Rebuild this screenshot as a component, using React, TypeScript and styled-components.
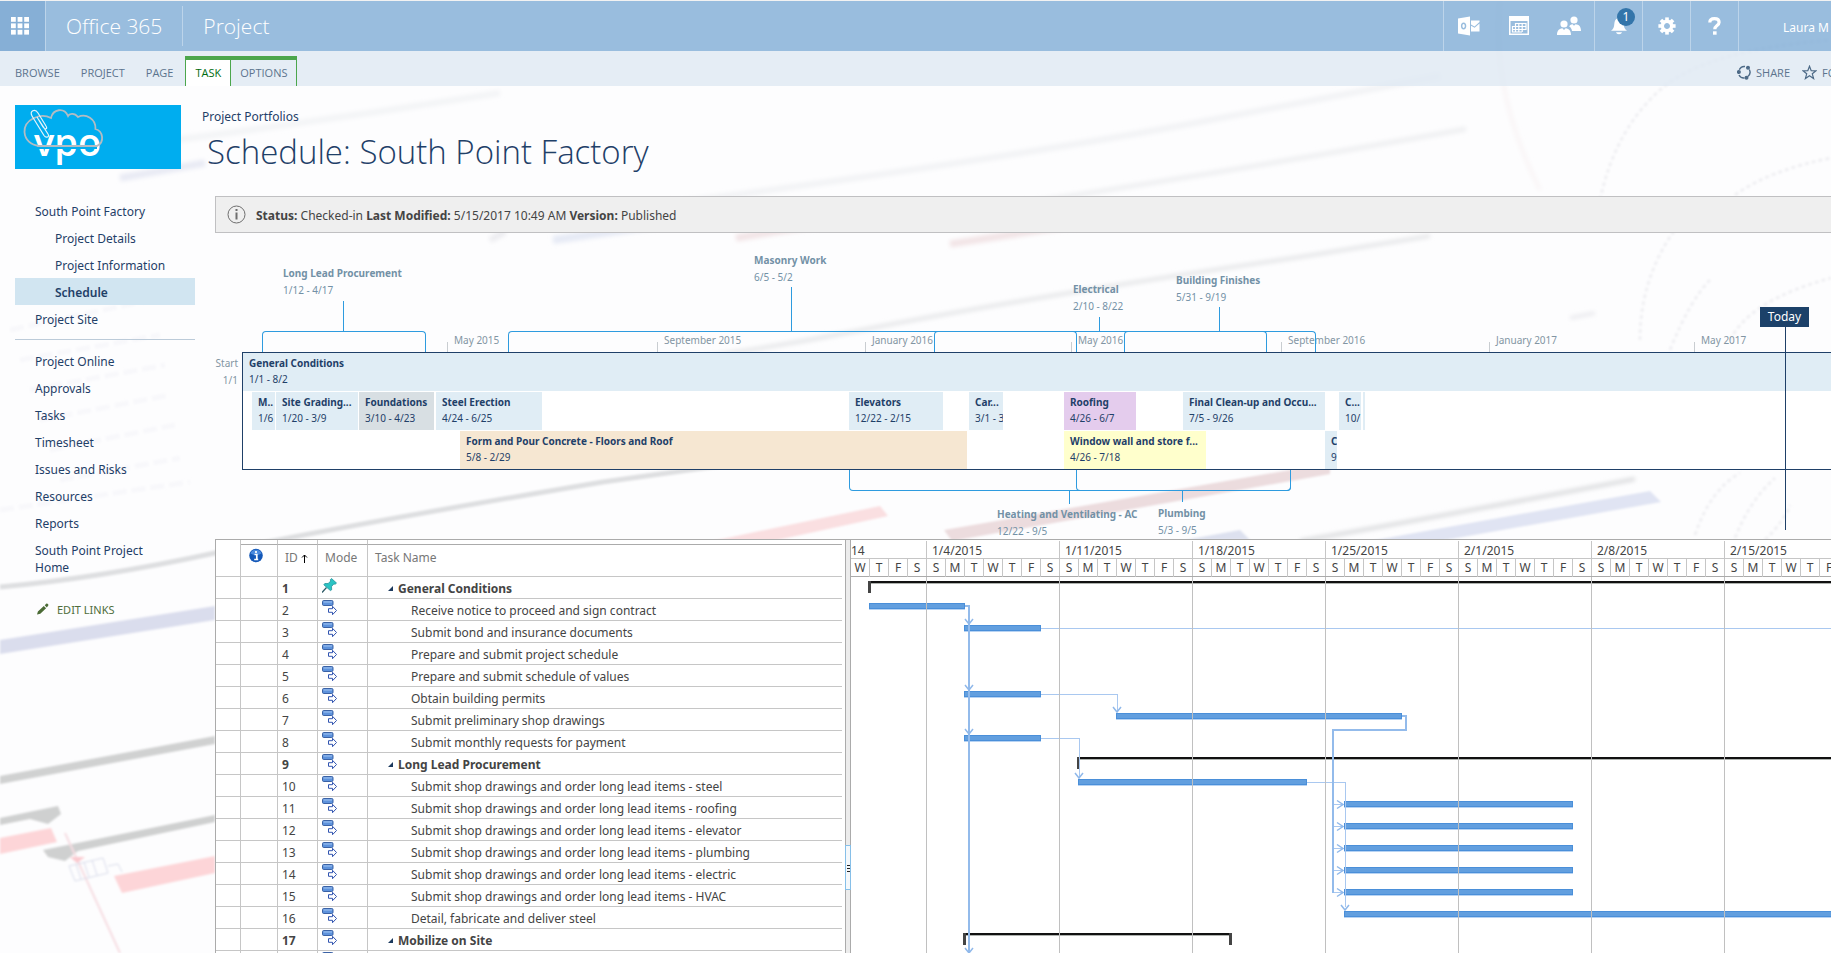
import React from "react";
import styled, { createGlobalStyle } from "styled-components";

const navy = "#1f4068";
const line = "#c6c6c6";

const GlobalStyle = createGlobalStyle`
  * { box-sizing: border-box; }
  html, body { margin: 0; height: 100%; }
  #root { height: 100vh; }
  body {
    font-family: "Noto Sans", "Open Sans", sans-serif;
    font-size: 12px;
    line-height: 17px;
    color: #444;
    background: #fdfdfe;
  }
  button { font: inherit; border: 0; padding: 0; background: none; cursor: pointer; }
  a { color: inherit; text-decoration: none; }
`;

const Page = styled.div`
  position: relative;
  z-index: 0;
  display: flex;
  flex-direction: column;
  height: 100%;
  overflow: hidden;
`;

const Backdrop = styled.svg`
  position: absolute;
  inset: 0;
  z-index: -1;
  width: 100%;
  height: 100%;
`;

/* ---------- suite bar ---------- */

const SuiteBar = styled.header`
  display: flex;
  flex: none;
  height: 51px;
  border-top: 1px solid #f2f2f2;
  background: rgba(128, 172, 214, 0.8);
  color: #fff;
`;

const Launcher = styled.button`
  display: grid;
  place-items: center;
  width: 46px;
  padding-right: 5px;
  background: rgba(104, 156, 202, 0.4);
  border-right: 1px solid #bcd4ea;
`;

const Brand = styled.a`
  display: flex;
  align-items: center;
  padding: 0 20px;
  font-family: "Open Sans", sans-serif;
  font-size: 21px;
  font-weight: 300;
`;

const BrandRule = styled.span`
  width: 1px;
  margin: 5px 0;
  background: #bcd4ea;
`;

const SuiteTools = styled.nav`
  display: flex;
  margin-left: auto;
`;

const ToolGroup = styled.div`
  display: flex;
  border-left: 1px solid #bcd4ea;
`;

const ToolButton = styled.button<{ $w: number }>`
  position: relative;
  display: grid;
  place-items: center;
  width: ${(p) => p.$w}px;
  padding-bottom: 1px;
  color: #fff;
`;

const Badge = styled.span`
  position: absolute;
  top: 7px;
  right: 7px;
  width: 18px;
  height: 18px;
  border-radius: 50%;
  background: #3375aa;
  line-height: 18px;
  text-align: center;
`;

const UserName = styled.button`
  width: 93px;
  padding: 2px 0 0 44px;
  color: #fff;
  text-align: left;
  white-space: nowrap;
  overflow: hidden;
  border-left: 1px solid #bcd4ea;
`;

/* ---------- ribbon ---------- */

const Ribbon = styled.div`
  display: flex;
  flex: none;
  align-items: flex-end;
  height: 35px;
  padding-left: 6px;
  background: rgba(222, 232, 243, 0.8);
  color: #5c748e;
  font-family: "Open Sans", sans-serif;
  font-size: 11px;
`;

const Tab = styled.button`
  height: 30px;
  margin-right: 3px;
  padding: 3px 9px 0;
  color: #5c748e;
`;

const TabGroup = styled.div`
  display: flex;
  border: 1px solid #4ca64c;
  border-width: 4px 1px 0;
`;

const GroupTab = styled.button<{ $active?: boolean }>`
  height: 26px;
  padding: 0 9px 1px;
  color: ${(p) => (p.$active ? "#006b10" : "#5c748e")};
  background: ${(p) => (p.$active ? "#fff" : "transparent")};
  border-right: ${(p) => (p.$active ? "1px solid #4ca64c" : "0")};
`;

const PageActions = styled.div`
  display: flex;
  gap: 12px;
  width: 94px;
  margin-left: auto;
  overflow: hidden;
`;

const PageAction = styled.button`
  display: flex;
  flex: none;
  align-items: center;
  gap: 5px;
  height: 28px;
  color: #5c748e;
`;

/* ---------- left column ---------- */

const Body = styled.div`
  display: flex;
  flex: 1;
  min-height: 0;
`;

const Side = styled.aside`
  flex: none;
  width: 195px;
  padding: 19px 0 0 15px;
  color: ${navy};
`;

const Logo = styled.a`
  display: block;
  width: 166px;
  height: 64px;
  margin-bottom: 28px;
  background: #00adef;
`;

const NavList = styled.ul`
  margin: 0;
  padding: 0;
  list-style: none;

  & + & {
    margin-top: 7px;
    padding-top: 7px;
    border-top: 1px solid #bccbd9;
  }
`;

const NavLink = styled.a<{ $sub?: boolean; $current?: boolean }>`
  display: block;
  padding: 6px 20px 4px ${(p) => (p.$sub ? 40 : 20)}px;
  background: ${(p) => (p.$current ? "#d1e5f1" : "transparent")};
  font-weight: ${(p) => (p.$current ? 600 : 400)};
`;

const EditLinks = styled.button`
  display: flex;
  align-items: center;
  gap: 8px;
  margin: 16px 0 0 22px;
  height: 26px;
  color: #4f6d3c;
  font-size: 11px;
`;

/* ---------- main column ---------- */

const Main = styled.main`
  display: flex;
  flex: 1;
  flex-direction: column;
  min-width: 0;
`;

const Heading = styled.div`
  padding: 22px 0 21px 7px;
  color: ${navy};

  h1 {
    margin: 4px 0 0 5px;
    font-family: "Open Sans", sans-serif;
    font-size: 33px;
    line-height: 46px;
    font-weight: 300;
  }
`;

const Content = styled.div`
  display: flex;
  flex: 1;
  flex-direction: column;
  min-height: 0;
  margin-left: 20px;
`;

const StatusBar = styled.div`
  display: flex;
  flex: none;
  align-items: center;
  gap: 10px;
  height: 37px;
  padding-left: 11px;
  border: 1px solid #c0c0c2;
  border-right: 0;
  background: #efefef;

  p { margin: 0; padding-top: 1px; }
  b { font-weight: 700; }
`;

/* ---------- timeline ---------- */

const Timeline = styled.section`
  position: relative;
  flex: none;
  height: 306px;
  overflow: hidden;
  font-size: 10px;
  color: #8295a3;
`;

const Track = styled.div`
  position: absolute;
  left: 27px;
  right: 0;
  top: 119px;
  height: 118px;
  background: #fff;
  border: 1px solid ${navy};
  border-right: 0;
`;

const TrackEdge = styled.div`
  position: absolute;
  top: 122px;
  left: 0;
  width: 23px;
  text-align: right;
  white-space: nowrap;
`;

const TimelineTask = styled.div<{ $x: number; $w?: number; $row: number; $fill: string }>`
  position: absolute;
  left: ${(p) => p.$x}px;
  ${(p) => (p.$w ? `width: ${p.$w}px;` : "right: 0;")}
  top: ${(p) => p.$row * 39}px;
  height: 38px;
  padding: 2px 0 0 ${(p) => (p.$w && p.$w < 6 ? 0 : 6)}px;
  overflow: hidden;
  background: ${(p) => p.$fill};
  color: ${navy};
  line-height: 16px;
  white-space: nowrap;

  b { display: block; font-weight: 700; }
`;

const Callout = styled.div<{ $x: number; $y: number }>`
  position: absolute;
  left: ${(p) => p.$x}px;
  top: ${(p) => p.$y}px;
  color: #7391a6;
  white-space: nowrap;

  b { display: block; font-weight: 700; }
`;

const Bracket = styled.div<{ $x: number; $w: number; $below?: boolean }>`
  position: absolute;
  left: ${(p) => p.$x}px;
  width: ${(p) => p.$w}px;
  top: ${(p) => (p.$below ? 237 : 98)}px;
  height: 21px;
  border: 1px solid #2e9bdf;
  ${(p) => (p.$below ? "border-top: 0; border-radius: 0 0 4px 4px;" : "border-bottom: 0; border-radius: 4px 4px 0 0;")}
`;

const Stem = styled.div<{ $x: number; $y: number; $h: number }>`
  position: absolute;
  left: ${(p) => p.$x}px;
  top: ${(p) => p.$y}px;
  width: 1px;
  height: ${(p) => p.$h}px;
  background: #2e9bdf;
`;

const Tick = styled.div<{ $x: number }>`
  position: absolute;
  left: ${(p) => p.$x}px;
  top: 99px;
  height: 20px;
  padding-left: 7px;
  white-space: nowrap;

  &::before {
    content: "";
    position: absolute;
    left: 0;
    bottom: 0;
    height: 10px;
    border-left: 1px solid #c9cdd1;
  }
`;

const Today = styled.div`
  position: absolute;
  left: 1545px;
  top: 74px;
  width: 49px;
  height: 20px;
  background: #1c4169;
  color: #fff;
  font-size: 12px;
  line-height: 19px;
  text-align: center;

  &::after {
    content: "";
    position: absolute;
    left: 25px;
    top: 20px;
    width: 1px;
    height: 203px;
    background: ${navy};
  }
`;

/* ---------- task grid ---------- */

const GridPanel = styled.section`
  display: flex;
  flex: 1;
  min-height: 0;
  overflow: hidden;
  background: #fff;
  border: 1px solid #ababab;
  border-width: 1px 0 0 1px;
`;

const TaskPane = styled.div`
  flex: none;
  width: 629px;
  padding-right: 3px;
  overflow: hidden;
`;

const TaskTable = styled.table`
  width: 100%;
  table-layout: fixed;
  border-collapse: separate;
  border-spacing: 0;

  th, td {
    padding: 0 4px;
    border: 0 solid ${line};
    border-width: 0 1px 1px 0;
    text-align: left;
    white-space: nowrap;
    overflow: hidden;
  }
  th:last-child, td:last-child { border-right: 0; }
`;

const CapRow = styled.tr`
  th { height: 5px; line-height: 4px; border-bottom-color: #ababab; }
  th:first-child { border-bottom: 0; }
`;

const HeadRow = styled.tr`
  th { height: 32px; padding: 3px 7px 9px; line-height: 18px; color: #777; font-weight: 400; }
  th:nth-child(2) { padding: 0 8px 11px; }
  svg { vertical-align: middle; }
`;

const TaskRow = styled.tr<{ $summary?: boolean }>`
  td { height: 22px; padding-top: 2px; font-weight: ${(p) => (p.$summary ? 700 : 400)}; }
  td:nth-child(4) { vertical-align: top; padding-top: 1px; }
  svg { display: block; }
`;

const TaskName = styled.span<{ $summary?: boolean }>`
  display: flex;
  align-items: center;
  gap: 5px;
  padding-left: ${(p) => (p.$summary ? 16 : 39)}px;
`;

const Splitter = styled.div`
  position: relative;
  flex: none;
  width: 6px;
  background: #ececec;
  border: 1px solid #ababab;
  border-width: 0 1px;
`;

const SplitterGrip = styled.button`
  position: absolute;
  top: 305px;
  left: -1px;
  display: grid;
  place-items: center;
  width: 6px;
  height: 45px;
  border: 1px solid #86bfe8;
  background: #f4f8fb;
`;

const GanttPane = styled.div`
  flex: 1;
  min-width: 0;
  overflow: hidden;
`;

const Scale = styled.div`
  display: flex;
  height: 37px;
  border-bottom: 1px solid #ababab;
`;

const Week = styled.div<{ $w: number; $first?: boolean }>`
  flex: none;
  width: ${(p) => p.$w}px;
  margin-top: 1px;
  border-right: 1px solid ${line};

  > div:first-child {
    height: 18px;
    padding-left: ${(p) => (p.$first ? 0 : 5)}px;
    line-height: 20px;
    border-bottom: 1px solid ${line};
    white-space: nowrap;
  }
`;

const Days = styled.div`
  display: flex;
  justify-content: flex-end;
  line-height: 18px;
  text-align: center;

  span { flex: none; width: 19px; border-right: 1px solid ${line}; }
  span:last-child { width: 18px; border-right: 0; }
`;

const Chart = styled.svg`
  display: block;
  width: 100%;
  height: 380px;
  overflow: hidden;
`;

/* ---------- data ---------- */

const siteLinks = [
  { text: "South Point Factory" },
  { text: "Project Details", sub: true },
  { text: "Project Information", sub: true },
  { text: "Schedule", sub: true, current: true },
  { text: "Project Site" },
];

const onlineLinks = [
  "Project Online", "Approvals", "Tasks", "Timesheet", "Issues and Risks",
  "Resources", "Reports", "South Point Project Home",
];

const blue = "#e0edf5";

const timelineTasks = [
  { name: "General Conditions", dates: "1/1 - 8/2", x: 0, row: 0, fill: blue },
  { name: "M..", dates: "1/6", x: 9, w: 23, row: 1, fill: blue },
  { name: "Site Grading...", dates: "1/20 - 3/9", x: 33, w: 82, row: 1, fill: blue },
  { name: "Foundations", dates: "3/10 - 4/23", x: 116, w: 75, row: 1, fill: "#d8dfe3" },
  { name: "Steel Erection", dates: "4/24 - 6/25", x: 193, w: 106, row: 1, fill: blue },
  { name: "Elevators", dates: "12/22 - 2/15", x: 606, w: 94, row: 1, fill: blue },
  { name: "Car...", dates: "3/1 - 3", x: 726, w: 34, row: 1, fill: blue },
  { name: "Roofing", dates: "4/26 - 6/7", x: 821, w: 72, row: 1, fill: "#e4cced" },
  { name: "Final Clean-up and Occu...", dates: "7/5 - 9/26", x: 940, w: 142, row: 1, fill: blue },
  { name: "C...", dates: "10/", x: 1096, w: 22, row: 1, fill: blue },
  { name: "", dates: "", x: 1120, w: 2, row: 1, fill: blue },
  { name: "Form and Pour Concrete - Floors and Roof", dates: "5/8 - 2/29", x: 217, w: 507, row: 2, fill: "#f6e7d2" },
  { name: "Window wall and store f...", dates: "4/26 - 7/18", x: 821, w: 142, row: 2, fill: "#ffffcc" },
  { name: "C", dates: "9", x: 1082, w: 12, row: 2, fill: blue },
];

const callouts = [
  { name: "Long Lead Procurement", dates: "1/12 - 4/17", x: 68, y: 32, bx: 47, bw: 164, stem: 128, sy: 68, sh: 30 },
  { name: "Masonry Work", dates: "6/5 - 5/2", x: 539, y: 19, bx: 293, bw: 569, stem: 576, sy: 54, sh: 44 },
  { name: "Electrical", dates: "2/10 - 8/22", x: 858, y: 48, bx: 719, bw: 333, stem: 884, sy: 84, sh: 14 },
  { name: "Building Finishes", dates: "5/31 - 9/19", x: 961, y: 39, bx: 909, bw: 192, stem: 1004, sy: 74, sh: 24 },
  { name: "Heating and Ventilating - AC", dates: "12/22 - 9/5", x: 782, y: 273, bx: 634, bw: 442, stem: 854, sy: 258, sh: 13, below: true },
  { name: "Plumbing", dates: "5/3 - 9/5", x: 943, y: 272, bx: 861, bw: 215, stem: 967, sy: 258, sh: 11, below: true },
];

const ticks = [
  { label: "May 2015", x: 232 },
  { label: "September 2015", x: 442 },
  { label: "January 2016", x: 650 },
  { label: "May 2016", x: 856 },
  { label: "September 2016", x: 1066 },
  { label: "January 2017", x: 1274 },
  { label: "May 2017", x: 1479 },
];

/* start and end are days counted from 1/1/2015; tasks without them have no bar */
type Task = { name: string; summary?: boolean; start?: number; end?: number };

const tasks: Task[] = [
  { name: "General Conditions", summary: true, start: 0, end: 400 },
  { name: "Receive notice to proceed and sign contract", start: 0, end: 5 },
  { name: "Submit bond and insurance documents", start: 5, end: 9 },
  { name: "Prepare and submit project schedule" },
  { name: "Prepare and submit schedule of values" },
  { name: "Obtain building permits", start: 5, end: 9 },
  { name: "Submit preliminary shop drawings", start: 13, end: 28 },
  { name: "Submit monthly requests for payment", start: 5, end: 9 },
  { name: "Long Lead Procurement", summary: true, start: 11, end: 400 },
  { name: "Submit shop drawings and order long lead items - steel", start: 11, end: 23 },
  { name: "Submit shop drawings and order long lead items - roofing", start: 25, end: 37 },
  { name: "Submit shop drawings and order long lead items - elevator", start: 25, end: 37 },
  { name: "Submit shop drawings and order long lead items - plumbing", start: 25, end: 37 },
  { name: "Submit shop drawings and order long lead items - electric", start: 25, end: 37 },
  { name: "Submit shop drawings and order long lead items - HVAC", start: 25, end: 37 },
  { name: "Detail, fabricate and deliver steel", start: 25, end: 400 },
  { name: "Mobilize on Site", summary: true, start: 5, end: 19 },
  { name: "" },
];

const weeks = ["1/4/2015", "1/11/2015", "1/18/2015", "1/25/2015", "2/1/2015", "2/8/2015", "2/15/2015"];
const dayLetters = ["S", "M", "T", "W", "T", "F", "S"];

const dayX = (d: number) => 18 + 19 * d;
const rowY = (id: number) => (id - 1) * 22;

/* ---------- icons ---------- */

const LauncherIcon = () => (
  <svg width="18" height="18" viewBox="0 0 18 18" fill="#fff">
    {[0, 1, 2].map((r) => [0, 1, 2].map((c) => (
      <rect key={`${r}${c}`} x={c * 6.6} y={r * 6.4} width="4.8" height="4.8" />
    )))}
  </svg>
);

const OutlookIcon = () => (
  <svg width="22" height="20" viewBox="0 0 22 20" fill="#fff">
    <path fillRule="evenodd" d="M0 2.5 12 .5v19L0 17.5zM5.6 6.6c-1.700 0-2.700 1.500-2.700 3.400s1 3.400 2.700 3.400 2.700-1.500 2.700-3.400-1-3.400-2.700-3.400zm0 1.500c.8 0 1.200.8 1.200 1.900s-.4 1.900-1.200 1.900-1.200-.8-1.200-1.900.4-1.900 1.200-1.900z" />
    <path d="M13 4.500h8.500v1.400l-5 4.500-3.500-2zM13 9.700l3.600 2 4.900-4.300v8.100H13z" />
  </svg>
);

const CalendarIcon = () => (
  <svg width="20" height="19" viewBox="0 0 20 19">
    <rect x=".75" y=".75" width="18.500" height="17.500" fill="none" stroke="#fff" strokeWidth="1.500" />
    <rect x="0" y="0" width="20" height="5" fill="#fff" />
    <path d="M6 7.500h11.500M3 10.500h14.500M3 13.500h14.500M3 16h10M3.500 10v6M6.500 7v9M9.800 7v9M13.200 7v9M17 7v7" stroke="#fff" strokeWidth="1.200" fill="none" />
  </svg>
);

const PeopleIcon = () => (
  <svg width="24" height="19" viewBox="0 0 24 19" fill="#fff">
    <circle cx="17" cy="4" r="3.600" />
    <path d="M13 9.200c1-.7 2-1 2.600-1l1.400 1.500 1.500-1.500C22 8.500 24 10.500 24 15h-9c-.3-2-1-3.500-2.800-4.500z" />
    <circle cx="7" cy="8" r="3.600" />
    <path d="M0 19c0-4 1.800-6.500 5.300-6.800L7 14l1.700-1.800C12.200 12.500 14 15 14 19z" />
  </svg>
);

const BellIcon = () => (
  <svg width="16" height="18" viewBox="0 0 16 18" fill="#fff">
    <path d="M8 0c.9 0 1.200.6 1.200 1.300C11.600 1.900 12.500 4 12.700 7c.2 3.500 1 5 3.300 6.800H0C2.300 12 3.100 10.500 3.300 7 3.500 4 4.400 1.900 6.800 1.300 6.800.6 7.100 0 8 0zM5 15.200h6c-.4 1.300-1.400 2-3 2s-2.600-.7-3-2z" />
  </svg>
);

const GearIcon = () => (
  <svg width="18" height="18" viewBox="-9 -9 18 18" fill="none" stroke="#fff">
    <circle r="4.700" strokeWidth="3.400" />
    {[0, 45, 90, 135, 180, 225, 270, 315].map((a) => (
      <path key={a} d="M0-5.500V-8.600" strokeWidth="3.600" transform={`rotate(${a})`} />
    ))}
  </svg>
);

const HelpIcon = () => (
  <svg width="13" height="18" viewBox="0 0 13 18" fill="none" stroke="#fff" strokeWidth="3.200">
    <path d="M1.800 5.600C1.800 3 3.700 1.700 6.400 1.700s4.700 1.300 4.700 3.600c0 3.400-4.300 3.200-4.300 7" />
    <path d="M5 16h3.600" strokeWidth="3.400" />
  </svg>
);

const ShareIcon = () => (
  <svg width="14" height="15" viewBox="0 0 14 15" fill="none" stroke="#4d6a87" strokeWidth="1.400">
    <path d="M2.300 4.800A5.500 5.500 0 0 1 8 1.500M12.300 4.500a5.600 5.600 0 0 1-1.500 7M7.500 13A5.500 5.500 0 0 1 2 10" />
    <circle cx="1.900" cy="7" r="1.300" fill="#4d6a87" />
    <circle cx="11" cy="2.700" r="1.300" fill="#4d6a87" />
    <circle cx="9.500" cy="12.700" r="1.300" fill="#4d6a87" />
  </svg>
);

const StarIcon = () => (
  <svg width="15" height="15" viewBox="0 0 15 15" fill="none" stroke="#4d6a87" strokeWidth="1.200">
    <path d="M7.500 1.200 9.200 5.600l4.800.2-3.700 3 1.300 4.700-4.100-2.700-4.100 2.700 1.300-4.700L1 5.800l4.800-.2z" />
  </svg>
);

const PencilIcon = () => (
  <svg width="12" height="12" viewBox="0 0 12 12" fill="#4b6b36">
    <path d="M0 11.500.9 8.400 6.800 3l2.300 2.300-5.800 5.400zM7.700 2.200 9.500.6c.7-.6 2.400 1 1.800 1.800L9.800 4.500z" />
  </svg>
);

const StatusIcon = () => (
  <svg width="19" height="19" viewBox="0 0 19 19" fill="none" stroke="#6e6e6e">
    <circle cx="9.500" cy="9.500" r="8.500" />
    <path d="M9.500 4v2M9.500 7.500v7" strokeWidth="2" />
  </svg>
);

const InfoIcon = () => (
  <svg width="14" height="15" viewBox="0 0 14 15">
    <circle cx="7" cy="7.500" r="6.800" fill="#1458b8" />
    <path d="M1.500 5.500a5.700 5 0 0 1 11 0q-5.500 3-11 0z" fill="#4a8ade" />
    <path d="M7 3v2M5.500 6.500h2.300v5M5.200 11.500h4" stroke="#fff" strokeWidth="1.700" fill="none" />
  </svg>
);

const PinIcon = () => (
  <svg width="15" height="15" viewBox="0 0 15 15">
    <path d="M0 14.500 4.500 9.500" stroke="#2d5a66" strokeWidth="1.200" />
    <path d="M9.500.5 14.500 5l-1.300 1.200-1.400-.2-2.300 2.600.2 3.200-1.300.8-6.600-5.800 1-1.300 3.300.1L8.700 3l-.4-1.300z" fill="#2bc4c4" stroke="#178a94" strokeWidth=".7" />
  </svg>
);

const AutoIcon = () => (
  <svg width="16" height="16" viewBox="0 0 16 16">
    <rect x=".5" y=".5" width="10.500" height="5" rx="1.200" fill="#5d92dc" stroke="#3b62a5" />
    <rect x="1.500" y="1.200" width="8.500" height="1.500" fill="#8db5ea" />
    <path d="M6.500 8.700h4V6.300l4 4.200-4 4.200v-2.400h-4z" fill="#fff" stroke="#3154b0" />
  </svg>
);

const LogoMark = () => (
  <svg width="166" height="64" viewBox="0 0 166 64" fill="none" role="img" aria-label="vpo">
    <text x="19" y="51" fontFamily="Open Sans, sans-serif" fontSize="38" fontWeight="600" fill="#fff">vpo</text>
    <path d="M22 42h60" stroke="#00adef" strokeWidth="4" />
    <path d="M22 41h60c8-4 6-15-1.500-17C81 14 71 8 63 12c-4-5-9-3-10-1-4-9-15-7-17 2C25 7 9 15 9.500 27 10 35 16 40 24 41z" stroke="#b3bcc3" strokeWidth="1.800" />
    <path d="M24 15 33 29c2 3-2 4.500-4 1.500L17 11c-3-5 3-8 6-3l8 13c2 3-1 4-3 1l-6-10" stroke="#e6f3fa" strokeWidth="1.200" />
  </svg>
);

/* ---------- backdrop ---------- */

const BackdropArt = () => (
  <Backdrop viewBox="0 0 1831 953" preserveAspectRatio="xMidYMid slice" aria-hidden="true" fill="none">
    <defs>
      <filter id="soft" x="-5%" y="-5%" width="110%" height="110%"><feGaussianBlur stdDeviation="2" /></filter>
      <filter id="slight" x="-5%" y="-5%" width="110%" height="110%"><feGaussianBlur stdDeviation="0.8" /></filter>
    </defs>
    <g filter="url(#soft)">
      <path d="M160 142Q330 120 500 93" stroke="#f3f4f6" strokeWidth="6" />
      <path d="M120 178 205 163" stroke="#e8eaf4" strokeWidth="7" />
      <path d="M660 205Q1000 160 1200 122T1440 76" stroke="#f2f3f5" strokeWidth="6" />
      <path d="M980 210Q1240 170 1466 129" stroke="#eff0f2" strokeWidth="5" />
      <path d="M490 240 505 232" stroke="#ececf0" strokeWidth="6" />
      <path d="M553 240 680 222" stroke="#e6eaf5" strokeWidth="8" />
      <path d="M736 238 860 218M950 244 1080 224" stroke="#f2e4e6" strokeWidth="7" />
      <path d="M560 372Q700 362 862 330T1300 257L1430 236" stroke="#e6e7e9" strokeWidth="4" />
      <path d="M1500 0Q1490 90 1540 190" stroke="#f9f5f6" strokeWidth="4" />
      <path d="M1570 318 1595 313" stroke="#ececf0" strokeWidth="4" />
      <path d="M1300 541Q1400 524 1635 479" stroke="#dcdddf" strokeWidth="4" />
    </g>
    <g filter="url(#slight)">
      <path d="M0 587Q100 578 215 553T603 482L760 460" stroke="#dedfe1" strokeWidth="5" />
      <path d="M703 543 880 506 888 516 740 548z" fill="#fadfe1" />
      <path d="M944 530 1330 463 1330 474 952 541z" fill="#ecdcde" />
      <path d="M1185 540 1240 530 1250 540z" fill="#dde1ef" />
      <path d="M1370 541 1650 491 1661 502 1440 541z" fill="#e0e4f3" />
      <path d="M0 640 215 606V620L0 654z" fill="#dadded" />
      <path d="M0 776 215 736V744L0 784z" fill="#d0d1d1" />
      <path d="M0 818 58 806 61 814 48 824 30 819 0 825z" fill="#cfd0d0" />
      <path d="M0 838 51 828 57 842 0 854z" fill="#fdd5d8" />
      <path d="M43 850 215 815V822L78 851 65 861 48 857z" fill="#cfd0d0" />
      <path d="M114 876 215 856V873L122 893z" fill="#fdd5d8" />
      <path d="M65 833 120 953" stroke="#f6dde2" strokeWidth="2" />
      <path d="M70 857h15l-8 6z" fill="#fbc9cf" />
      <path d="M69 866 103 858 108 873 75 881zM76 864l5 15M84 862l5 15M92 860l5 15M108 866l10-2 4 8" stroke="#d9dcea" strokeWidth="1" />
    </g>
    <g stroke="#f0f0f3" strokeWidth="3" strokeDasharray="4 3" filter="url(#slight)">
      <path d="M1600 200Q1615 130 1660 90T1831 40" />
      <path d="M1735 195Q1770 170 1831 158" />
      <path d="M1640 340Q1640 260 1700 200" />
      <path d="M1670 350Q1690 300 1710 280" />
      <path d="M1730 340Q1750 300 1831 278" />
      <path d="M1695 535Q1710 490 1740 473" />
      <path d="M1735 538Q1750 500 1775 478" />
      <path d="M1765 540Q1785 520 1790 505" />
    </g>
    <g stroke="#f8f8fb" strokeWidth="5" strokeDasharray="14 5" filter="url(#slight)">
      <path d="M10 330 150 300M20 360 160 335M30 390 165 365M40 420 170 395M50 450 175 425M60 480 180 458M0 510 190 482" />
    </g>
  </Backdrop>
);

/* ---------- gantt chart ---------- */

const GanttChart = () => (
  <Chart shapeRendering="crispEdges" fill="none">
    {tasks.map((t, i) => {
      if (t.start === undefined || t.end === undefined) return null;
      const x = dayX(t.start);
      const w = dayX(t.end) - x;
      const y = rowY(i + 1) + 4;
      if (t.summary) {
        return (
          <g key={i}>
            <rect x={x - 1} y={y} width={w + 2} height="2" fill="#111" />
            <rect x={x - 1} y={y + 2} width={w + 2} height="1" fill="#aeb2ae" />
            <rect x={x - 1} y={y} width="3" height="12" fill="#444" />
            <rect x={x + w - 1} y={y} width="3" height="12" fill="#444" />
          </g>
        );
      }
      return (
        <g key={i}>
          <rect x={x} y={y + 6} width={w + 1} height="1" fill="#b7d3f3" />
          <rect x={x} y={y} width={w + 1} height="6" fill="#4a8fd9" />
          <rect x={x + 1} y={y + 1} width={w - 1} height="4" fill="#629fdf" />
        </g>
      );
    })}
    <g stroke="#a9c8f0" strokeWidth="1">
      <path d="M190 51.500H2000" />
      <path d="M190 117.500H266V134" />
      <path d="M190 161.500H228V200" />
      <path d="M456 205.500H494V330" />
      {[11, 12, 13, 14, 15].map((id) => <path key={id} d={`M482 ${rowY(id) + 7.5}H492`} />)}
    </g>
    <g stroke="#93bbeb" strokeWidth="2">
      <path d="M114 29H118V376" />
      <path d="M551 139H555V153H482V316" />
    </g>
    <g stroke="#8fb8ea" strokeWidth="1.500" shapeRendering="geometricPrecision">
      {[[118, 47], [118, 113], [118, 157], [118, 376], [266, 135], [228, 201], [494, 333]].map(([x, y]) => (
        <path key={`${x}${y}`} d={`M${x - 4} ${y - 5}L${x} ${y}L${x + 4} ${y - 5}`} />
      ))}
      {[11, 12, 13, 14, 15].map((id) => (
        <path key={id} d={`M486 ${rowY(id) + 3.5}L492 ${rowY(id) + 7.5}L486 ${rowY(id) + 11.500}`} />
      ))}
    </g>
    <g stroke="#c0c0c0">
      {weeks.map((w, i) => <path key={w} d={`M${75.5 + 133 * i} 0V400`} />)}
    </g>
  </Chart>
);

export default function App() {
  return (
    <Page>
      <GlobalStyle />
      <BackdropArt />
      <SuiteBar>
        <Launcher aria-label="App launcher"><LauncherIcon /></Launcher>
        <Brand href="#">Office 365</Brand>
        <BrandRule />
        <Brand href="#">Project</Brand>
        <SuiteTools>
          <ToolGroup>
            <ToolButton $w={50} aria-label="Mail"><OutlookIcon /></ToolButton>
            <ToolButton $w={50} aria-label="Calendar"><CalendarIcon /></ToolButton>
            <ToolButton $w={50} aria-label="People"><PeopleIcon /></ToolButton>
          </ToolGroup>
          <ToolGroup>
            <ToolButton $w={47} aria-label="Notifications"><BellIcon /><Badge>1</Badge></ToolButton>
          </ToolGroup>
          <ToolGroup>
            <ToolButton $w={47} aria-label="Settings"><GearIcon /></ToolButton>
          </ToolGroup>
          <ToolGroup>
            <ToolButton $w={47} aria-label="Help"><HelpIcon /></ToolButton>
          </ToolGroup>
          <UserName>Laura M</UserName>
        </SuiteTools>
      </SuiteBar>

      <Ribbon>
        <Tab>BROWSE</Tab>
        <Tab>PROJECT</Tab>
        <Tab>PAGE</Tab>
        <TabGroup>
          <GroupTab $active>TASK</GroupTab>
          <GroupTab>OPTIONS</GroupTab>
        </TabGroup>
        <PageActions>
          <PageAction><ShareIcon />SHARE</PageAction>
          <PageAction><StarIcon />FO</PageAction>
        </PageActions>
      </Ribbon>

      <Body>
        <Side>
          <Logo href="#"><LogoMark /></Logo>
          <nav>
            <NavList>
              {siteLinks.map((l) => (
                <li key={l.text}><NavLink href="#" $sub={l.sub} $current={l.current}>{l.text}</NavLink></li>
              ))}
            </NavList>
            <NavList>
              {onlineLinks.map((l) => <li key={l}><NavLink href="#">{l}</NavLink></li>)}
            </NavList>
          </nav>
          <EditLinks><PencilIcon />EDIT LINKS</EditLinks>
        </Side>

        <Main>
          <Heading>
            <a href="#">Project Portfolios</a>
            <h1>Schedule: South Point Factory</h1>
          </Heading>
          <Content>
            <StatusBar>
              <StatusIcon />
              <p><b>Status:</b> Checked-in <b>Last Modified:</b> 5/15/2017 10:49 AM <b>Version:</b> Published</p>
            </StatusBar>

            <Timeline>
              {ticks.map((t) => <Tick key={t.label} $x={t.x}>{t.label}</Tick>)}
              {callouts.map((c) => (
                <React.Fragment key={c.name}>
                  <Callout $x={c.x} $y={c.y}><b>{c.name}</b>{c.dates}</Callout>
                  <Stem $x={c.stem} $y={c.sy} $h={c.sh} />
                  <Bracket $x={c.bx} $w={c.bw} $below={c.below} />
                </React.Fragment>
              ))}
              <TrackEdge>Start<br />1/1</TrackEdge>
              <Track>
                {timelineTasks.map((t) => (
                  <TimelineTask key={t.x + t.name} $x={t.x} $w={t.w} $row={t.row} $fill={t.fill}>
                    <b>{t.name}</b>{t.dates}
                  </TimelineTask>
                ))}
              </Track>
              <Today>Today</Today>
            </Timeline>

            <GridPanel>
              <TaskPane>
                <TaskTable>
                  <colgroup>
                    <col style={{ width: 25 }} />
                    <col style={{ width: 37 }} />
                    <col style={{ width: 40 }} />
                    <col style={{ width: 50 }} />
                    <col />
                  </colgroup>
                  <thead>
                    <CapRow><th /><th /><th /><th /><th /></CapRow>
                    <HeadRow>
                      <th />
                      <th><InfoIcon /></th>
                      <th scope="col">
                        ID{" "}
                        <svg width="7" height="9" viewBox="0 0 7 9" fill="none" stroke="#000"><path d="M3.500 9V1M1 3.500l2.500-2.500L6 3.500" /></svg>
                      </th>
                      <th scope="col">Mode</th>
                      <th scope="col">Task Name</th>
                    </HeadRow>
                  </thead>
                  <tbody>
                    {tasks.map((t, i) => (
                      <TaskRow key={i} $summary={t.summary}>
                        <td />
                        <td />
                        <td>{t.name && i + 1}</td>
                        <td>{i === 0 ? <PinIcon /> : <AutoIcon />}</td>
                        <td>
                          <TaskName $summary={t.summary}>
                            {t.summary && <svg width="5" height="5" viewBox="0 0 5 5"><path d="M5 0v5H0z" fill="#1c3a5e" /></svg>}
                            {t.name}
                          </TaskName>
                        </td>
                      </TaskRow>
                    ))}
                  </tbody>
                </TaskTable>
              </TaskPane>
              <Splitter>
                <SplitterGrip aria-label="Resize panes">
                  <svg width="3" height="8" viewBox="0 0 3 8" stroke="#222"><path d="M0 1.500h3M0 4.500h3M0 7.500h3" /></svg>
                </SplitterGrip>
              </Splitter>
              <GanttPane>
                <Scale>
                  <Week $w={76} $first>
                    <div>14</div>
                    <Days>{dayLetters.slice(3).map((d, i) => <span key={i}>{d}</span>)}</Days>
                  </Week>
                  {weeks.map((w) => (
                    <Week key={w} $w={133}>
                      <div>{w}</div>
                      <Days>{dayLetters.map((d, i) => <span key={i}>{d}</span>)}</Days>
                    </Week>
                  ))}
                </Scale>
                <GanttChart />
              </GanttPane>
            </GridPanel>
          </Content>
        </Main>
      </Body>
    </Page>
  );
}
